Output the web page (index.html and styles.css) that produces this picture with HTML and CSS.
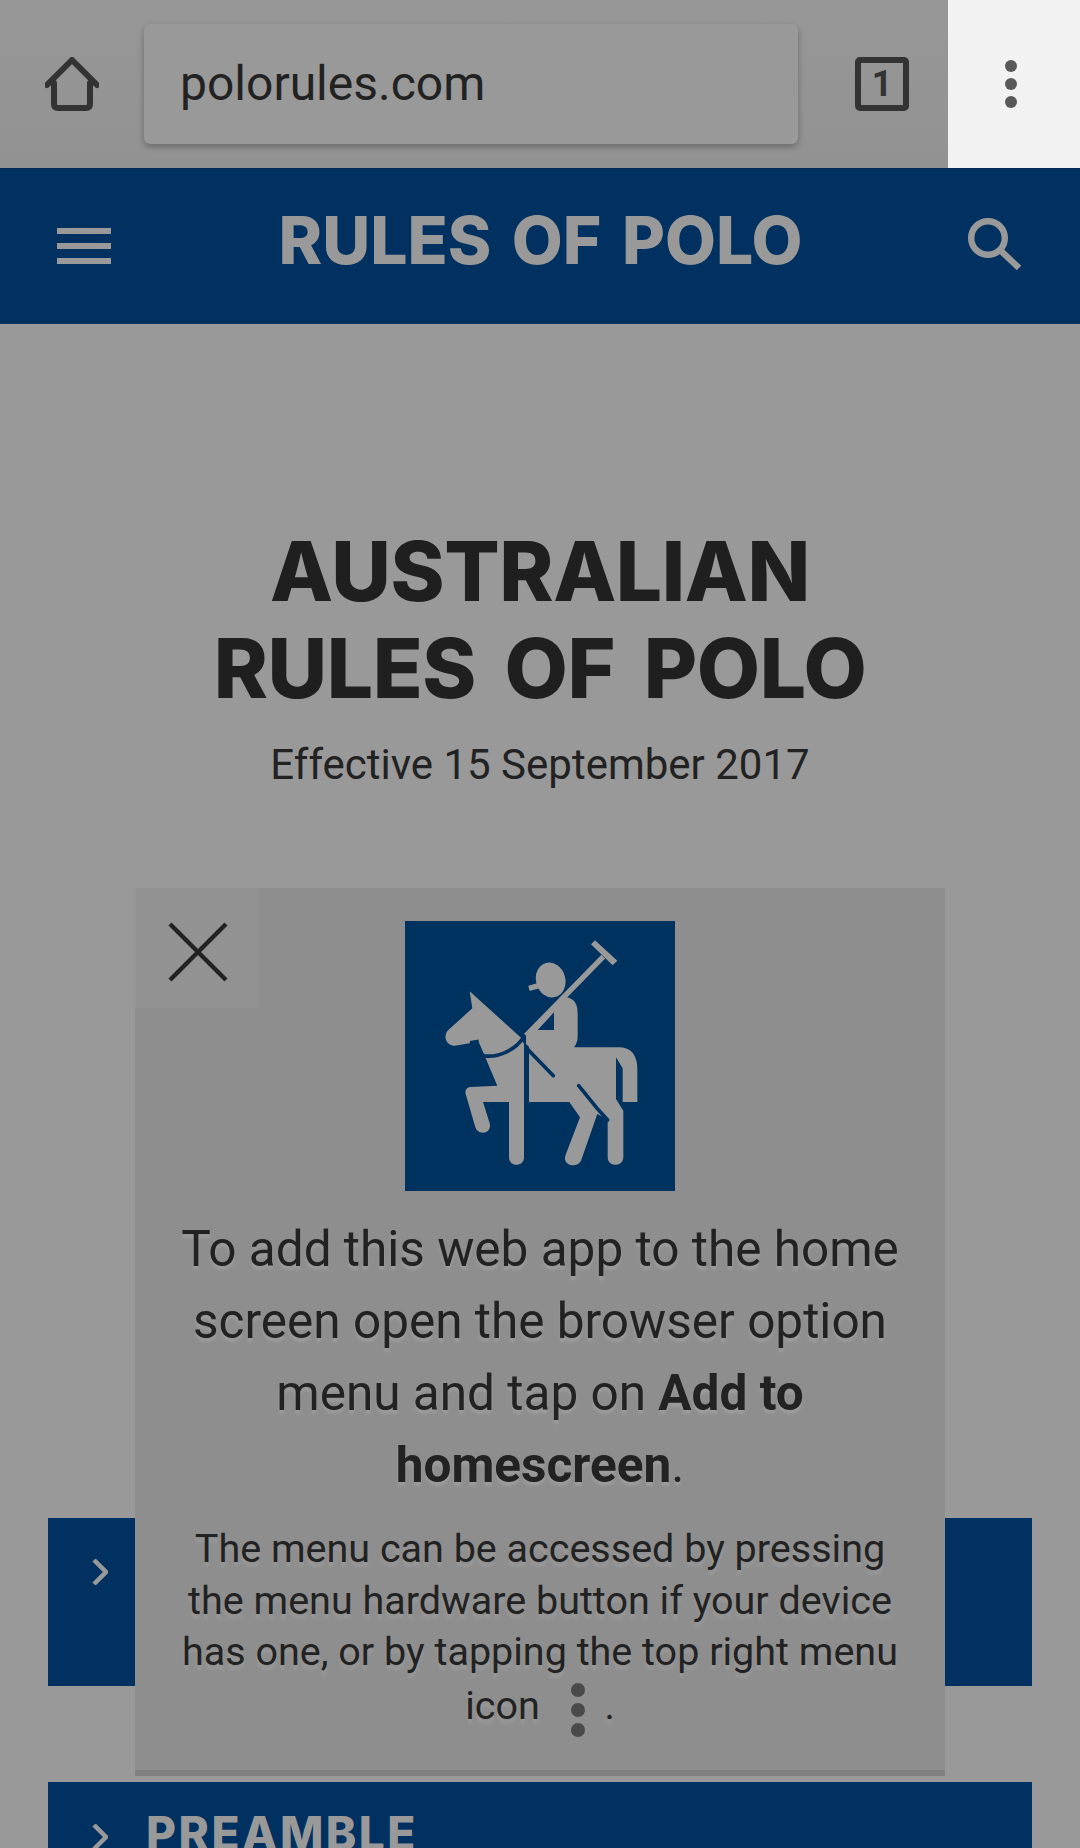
FILE: index.html
```html
<!DOCTYPE html>
<html lang="en">
<head>
<meta charset="utf-8">
<title>Rules of Polo</title>
<link rel="stylesheet" href="styles.css">
</head>
<body>
<div class="screen">
  <div class="browser-bar">
    <svg class="home-icon" viewBox="0 0 54 54" width="54" height="54"><path d="M2 28 L27 3 L52 28" class="home-roof"/><path d="M9 26 V47 Q9 51 13 51 H41 Q45 51 45 47 V26" class="home-roof"/></svg>
    <div class="url-box">polorules.com</div>
    <div class="tab-count">1</div>
    <div class="kebab-panel">
      <svg class="kebab" viewBox="0 0 12 48" width="12" height="48"><circle cx="6" cy="6" r="6"/><circle cx="6" cy="24" r="6"/><circle cx="6" cy="42" r="6"/></svg>
    </div>
  </div>
  <header class="site-header">
    <div class="burger"><span></span><span></span><span></span></div>
    <div class="site-title">RULES OF POLO</div>
    <svg class="search-icon" viewBox="0 0 54 54" width="54" height="54"><circle cx="21" cy="21" r="16.8"/><path d="M33 33 L52 51"/></svg>
  </header>
  <main class="page">
    <h1 class="page-title">AUSTRALIAN<br>RULES OF POLO</h1>
    <p class="page-sub">Effective 15 September 2017</p>
    <div class="rows">
      <div class="row row-first">
        <svg class="chev" viewBox="0 0 16 26" width="16" height="26"><path d="M2 1 L14 13 L2 25"/></svg>
      </div>
      <div class="row row-second">
        <svg class="chev" viewBox="0 0 16 26" width="16" height="26"><path d="M2 1 L14 13 L2 25"/></svg>
        <span class="row-label">PREAMBLE</span>
      </div>
    </div>
  </main>
  <section class="modal">
    <div class="modal-close">
      <svg viewBox="0 0 60 60" width="60" height="60"><path d="M2 2 L58 58 M58 2 L2 58"/></svg>
    </div>
    <svg class="polo-logo" viewBox="15 3 810 810" width="270" height="270">
      <rect class="logo-bg" x="15" y="3" width="810" height="810"/>
      <ellipse class="logo-fg" cx="452" cy="180" rx="44" ry="53" transform="rotate(-15 452 180)"/>
      <path class="logo-fg" d="M385 197 L414 189 L418 205 L389 213 Z"/>
      <path class="logo-fg" d="M573 73 L585 61 L652 122 L638 136 Z"/>
      <path class="logo-line" d="M610 110 L378 347"/>
      <path class="logo-fg" d="M209 214 L217 265 L145 330 C128 346 137 378 165 377 L236 365 L292 497 L212 501 C200 501 194 512 197 522 L226 622 C234 648 277 642 269 610 L249 546 L327 546 L327 712 C327 742 372 742 372 712 L372 372 L363 353 Z"/>
      <path class="logo-fg" d="M378 345 L500 232 C525 236 533 255 533 280 L533 350 C533 365 527 375 522 382 L660 382 C695 382 712 410 712 445 L712 546 L668 546 L668 445 L648 412 L648 537 L670 572 L670 712 C670 742 623 742 623 712 L623 598 L592 582 L543 722 C530 748 484 735 497 704 L540 592 L508 546 L387 546 L387 380 L378 372 Z"/>
      <path class="logo-cut" d="M413 330 L462 330 L462 277 Z"/>
      <path class="logo-rein" d="M372 350 C345 392 295 412 255 408 C232 402 212 390 215 368 L236 364"/>
      <path class="logo-rule" d="M380 385 L460 467"/>
      <path class="logo-rule" d="M536 497 L592 566 L623 600"/>
    </svg>
    <p class="modal-lead">To add this web app to the home screen open the browser option menu and tap on <b>Add to homescreen</b>.</p>
    <p class="modal-note">The menu can be accessed by pressing the menu hardware button if your device has one, or by tapping the top right menu icon <svg class="kebab-inline" viewBox="0 0 14 54" width="14" height="54"><circle cx="7" cy="7" r="7"/><circle cx="7" cy="27" r="7"/><circle cx="7" cy="47" r="7"/></svg> .</p>
  </section>
</div>
</body>
</html>
```
FILE: styles.css
```css
* { box-sizing: border-box; }
html, body { margin: 0; padding: 0; }
body { width: 1080px; height: 1848px; overflow: hidden; background: #999; font-family: Roboto, "Liberation Sans", sans-serif; color: #1f1f1f; }
.screen { position: relative; width: 1080px; height: 1848px; overflow: hidden; }

.browser-bar { height: 168px; display: flex; align-items: center; background: linear-gradient(#979797, #929292); padding-left: 45px; }
.home-icon { flex: none; margin-right: 45px; margin-top: 0; }
.home-roof { fill: none; stroke: #333; stroke-width: 6; stroke-linecap: round; stroke-linejoin: round; }
.url-box { flex: none; width: 654px; height: 120px; background: #999; border-radius: 6px; box-shadow: 0 3px 6px rgba(0,0,0,.28); padding-left: 36px; font-size: 48px; line-height: 120px; color: #222; }
.tab-count { flex: none; width: 54px; height: 54px; margin-left: 57px; border: 6px solid #333; border-radius: 5px; text-align: center; font-size: 36px; font-weight: 700; line-height: 42px; color: #333; }
.kebab-panel { flex: none; width: 132px; height: 168px; margin-left: 39px; background: #f2f2f2; display: flex; align-items: center; padding-left: 57px; }
.kebab { fill: #595959; display: block; }

.site-header { height: 156px; background: #003160; border-top: 1px solid #002a54; display: flex; align-items: flex-start; justify-content: space-between; padding: 0 59px 0 57px; }
.burger { width: 54px; margin-top: 59px; display: flex; flex-direction: column; gap: 9px; }
.burger span { display: block; height: 6px; background: #999; }
.site-title { font-family: Inter, sans-serif; font-weight: 800; font-size: 66px; line-height: 72px; word-spacing: 6px; color: #999; margin: 35px 0 0 3px; }
.search-icon { fill: none; stroke: #999; stroke-width: 6.4; margin-top: 48px; }

.page { display: flex; flex-direction: column; align-items: center; }
.page-title { margin: 199px 0 0; font-family: Inter, sans-serif; font-weight: 800; font-size: 82px; line-height: 97px; letter-spacing: -.4px; word-spacing: 11px; text-align: center; color: #1f1f1f; }
.page-sub { margin: 23px 0 0; font-size: 42px; line-height: 50px; color: #222; }
.rows { width: 984px; margin-top: 728px; display: flex; flex-direction: column; gap: 96px; }
.row { background: #003160; display: flex; align-items: flex-start; padding-left: 44px; color: #999; }
.row-first { height: 168px; padding-top: 41px; }
.row-second { height: 168px; padding-top: 42px; }
.chev { fill: none; stroke: #999; stroke-width: 4.5; flex: none; display: block; }
.row-label { font-family: Inter, sans-serif; font-weight: 800; font-size: 46px; line-height: 46px; letter-spacing: 2.5px; margin-left: 38px; margin-top: -14px; }

.modal { position: absolute; left: 135px; top: 888px; width: 810px; height: 888px; background: #8e8e8e; border-bottom: 6px solid #808080; padding-top: 33px; display: flex; flex-direction: column; align-items: center; text-align: center; }
.modal-close { position: absolute; left: 0; top: 0; width: 123px; height: 120px; background: #929292; display: flex; align-items: center; justify-content: center; padding: 7px 0 0 2px; }
.modal-close svg { fill: none; stroke: #222; stroke-width: 4.4; display: block; }
.polo-logo { flex: none; display: block; }
.logo-bg { fill: #00325f; }
.logo-fg { fill: #999; }
.logo-line { fill: none; stroke: #999; stroke-width: 16; }
.logo-cut { fill: #00325f; }
.logo-rein { fill: none; stroke: #00325f; stroke-width: 11; }
.logo-rule { fill: none; stroke: #00325f; stroke-width: 11; stroke-linecap: round; }
.modal-lead { margin: 22px 0 0; width: 740px; font-size: 49.5px; line-height: 72px; color: #222; text-shadow: 0 4px 3px rgba(255,255,255,.13); }
.modal-note { margin: 22px 0 0; width: 740px; font-size: 39.5px; line-height: 51.5px; color: #222; text-shadow: 0 5px 3px rgba(255,255,255,.1); }
.kebab-inline { fill: #4a4a4a; display: inline-block; vertical-align: -18px; margin: 5px 10px 0 21px; }
```
